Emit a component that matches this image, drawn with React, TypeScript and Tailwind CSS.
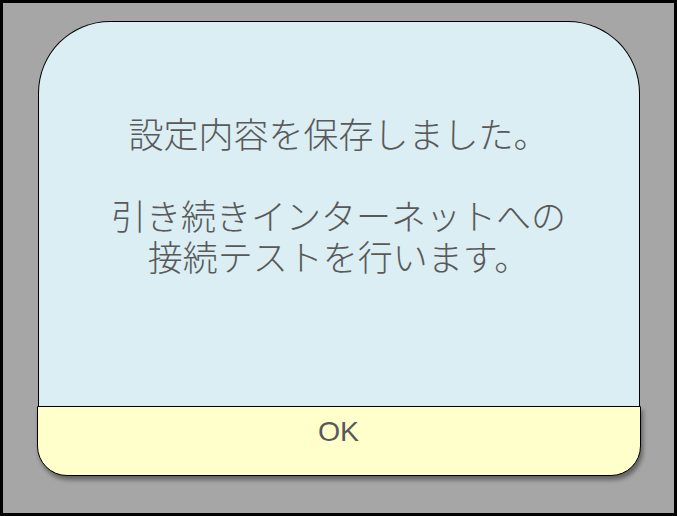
import React from 'react';

const message = ['設定内容を保存しました。', '', '引き続きインターネットへの', '接続テストを行います。'];

export default function App() {
  return (
    <div className="w-[677px] h-[516px] border-[3px] border-black bg-[#a6a6a6] flex flex-col items-center pt-[18px]">
      <div className="w-[604px] flex flex-col items-center">
        {/* message panel */}
        <div
          className="w-[602px] h-[385px] bg-[#daeef3] border border-black border-b-0 rounded-t-[72px] pt-[90px] text-center text-[#595959] text-[35px] font-light leading-[41px]"
          style={{ fontFamily: '"Noto Sans CJK JP", "Noto Sans", sans-serif' }}
        >
          {message.map((line, i) => (
            <div key={i} className="h-[41px]">
              {line}
            </div>
          ))}
        </div>

        {/* OK button */}
        <button
          className="w-[604px] h-[70px] bg-[#ffffcc] border border-black rounded-b-[30px] shadow-[2px_4px_4px_rgba(0,0,0,0.4)] flex justify-center pt-[8px] text-[28.5px] leading-[32px] text-[#595959]"
          style={{ fontFamily: '"Liberation Sans", Arial, sans-serif' }}
        >
          OK
        </button>
      </div>
    </div>
  );
}
